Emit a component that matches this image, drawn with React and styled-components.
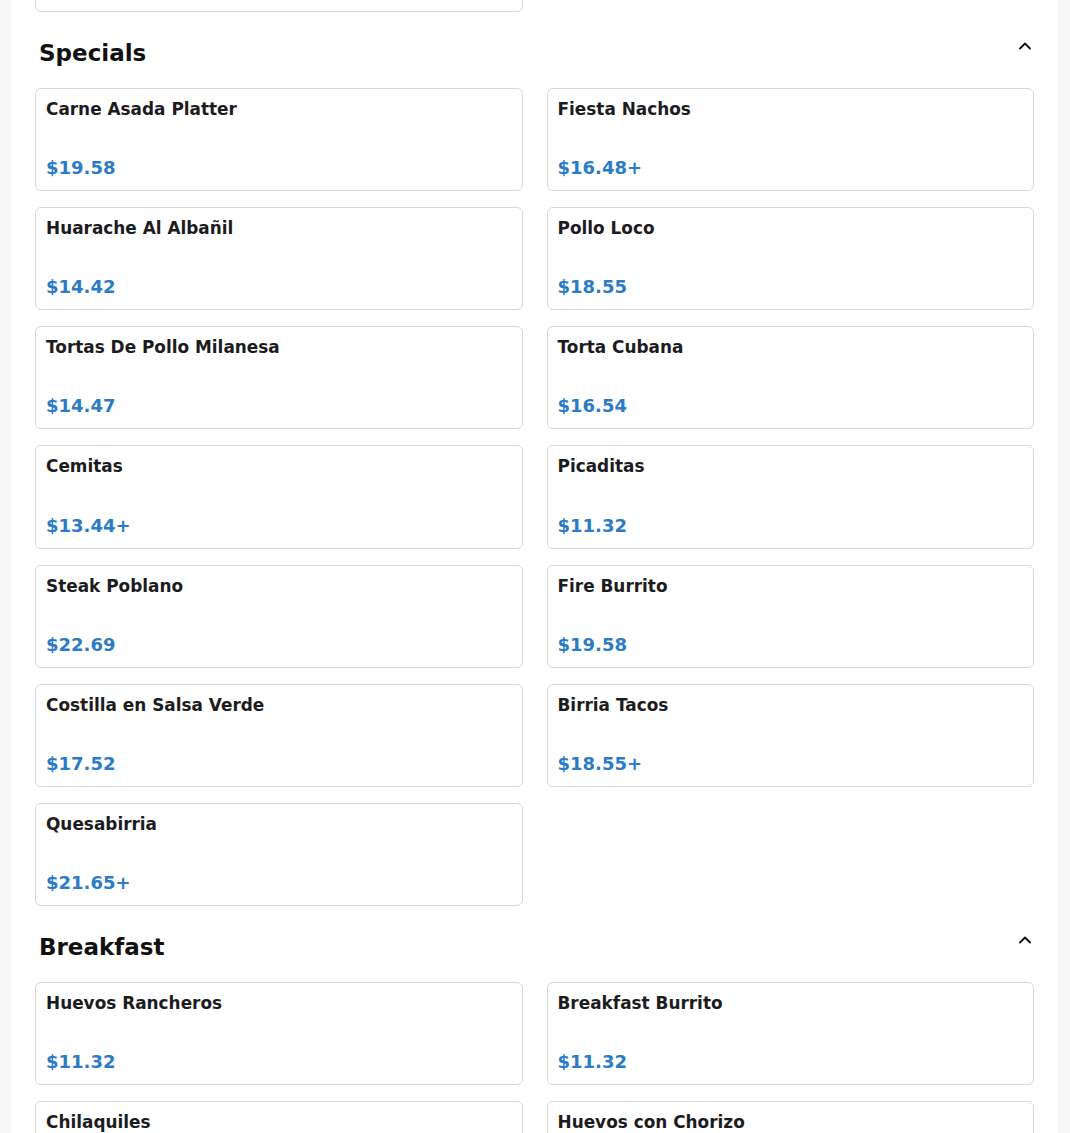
import React from "react";
import styled, { createGlobalStyle } from "styled-components";
import { ChevronUp } from "lucide-react";

const menu = [
  {
    name: "Lunch",
    items: [{ name: "Enchiladas Suizas", price: "$15.46" }],
  },
  {
    name: "Specials",
    items: [
      { name: "Carne Asada Platter", price: "$19.58" },
      { name: "Fiesta Nachos", price: "$16.48+" },
      { name: "Huarache Al Albañil", price: "$14.42" },
      { name: "Pollo Loco", price: "$18.55" },
      { name: "Tortas De Pollo Milanesa", price: "$14.47" },
      { name: "Torta Cubana", price: "$16.54" },
      { name: "Cemitas", price: "$13.44+" },
      { name: "Picaditas", price: "$11.32" },
      { name: "Steak Poblano", price: "$22.69" },
      { name: "Fire Burrito", price: "$19.58" },
      { name: "Costilla en Salsa Verde", price: "$17.52" },
      { name: "Birria Tacos", price: "$18.55+" },
      { name: "Quesabirria", price: "$21.65+" },
    ],
  },
  {
    name: "Breakfast",
    items: [
      { name: "Huevos Rancheros", price: "$11.32" },
      { name: "Breakfast Burrito", price: "$11.32" },
      { name: "Chilaquiles", price: "$12.36" },
      { name: "Huevos con Chorizo", price: "$11.32" },
    ],
  },
];

const GlobalStyle = createGlobalStyle`
  body {
    margin: 0;
    background: #f7f7f7;
    font-family: "DejaVu Sans", "Liberation Sans", sans-serif;
    overflow: hidden;
  }
`;

const App = () => {
  return (
    <>
      <GlobalStyle />
      <Page>
        <MenuPanel>
          {menu.map((section, i) => (
            <Section key={section.name} first={i === 0}>
              {i > 0 && (
                <SectionHeader>
                  <SectionTitle>{section.name}</SectionTitle>
                  <Toggle aria-label="Collapse section">
                    <ChevronUp size={20} strokeWidth={2.2} />
                  </Toggle>
                </SectionHeader>
              )}
              <ItemGrid>
                {section.items.map((item) => (
                  <ItemCard key={item.name}>
                    <ItemName>{item.name}</ItemName>
                    <ItemPrice>{item.price}</ItemPrice>
                  </ItemCard>
                ))}
              </ItemGrid>
            </Section>
          ))}
        </MenuPanel>
      </Page>
    </>
  );
};

export default App;

const Page = styled.div`
  height: 1133px;
  overflow: hidden;
`;

// page is scrolled: the last card of the previous section peeks in at the top
const MenuPanel = styled.main`
  width: 1047px;
  margin: -91px 0 0 11px;
  padding: 0 24px 40px;
  box-sizing: border-box;
  background: #ffffff;
`;

const Section = styled.section`
  padding-top: ${(p) => (p.first ? "0" : "24px")};
`;

const SectionHeader = styled.div`
  display: flex;
  justify-content: space-between;
  align-items: flex-start;
  padding-left: 4px;
  margin-bottom: 20px;
`;

const SectionTitle = styled.h2`
  margin: 0;
  padding-top: 4px;
  font-size: 23px;
  line-height: 1.2;
  font-weight: 700;
  color: #111111;
`;

const Toggle = styled.button`
  display: flex;
  align-items: center;
  justify-content: center;
  padding: 0;
  margin-right: -1px;
  border: none;
  background: none;
  color: #111111;
  cursor: pointer;
`;

const ItemGrid = styled.div`
  display: grid;
  grid-template-columns: 1fr 1fr;
  column-gap: 24px;
  row-gap: 16px;
`;

const ItemCard = styled.div`
  display: flex;
  flex-direction: column;
  justify-content: space-between;
  height: 103.2px;
  box-sizing: border-box;
  padding: 10px 10px 12px;
  border: 1px solid #d8d8d8;
  border-radius: 6px;
  background: #ffffff;
`;

const ItemName = styled.div`
  font-size: 16.9px;
  line-height: normal;
  font-weight: 700;
  color: #1c1c1e;
`;

const ItemPrice = styled.div`
  font-size: 18px;
  line-height: normal;
  font-weight: 700;
  color: #2b7bc6;
`;
